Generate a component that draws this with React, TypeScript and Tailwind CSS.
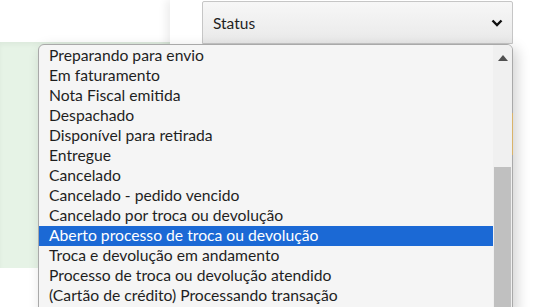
import React from 'react';

const options = [
  'Preparando para envio',
  'Em faturamento',
  'Nota Fiscal emitida',
  'Despachado',
  'Disponível para retirada',
  'Entregue',
  'Cancelado',
  'Cancelado - pedido vencido',
  'Cancelado por troca ou devolução',
  'Aberto processo de troca ou devolução',
  'Troca e devolução em andamento',
  'Processo de troca ou devolução atendido',
  '(Cartão de crédito) Processando transação',
];

const selected = 9;

export default function App() {
  return (
    <div
      className="relative w-[536px] h-[307px] overflow-hidden bg-white text-[#1f1f1f]"
      style={{ fontFamily: 'Lato, "Open Sans", sans-serif' }}
    >
      {/* Page behind the open select */}
      <div className="flex h-full">
        <div className="w-[170px] flex flex-col">
          <div className="h-[42px] bg-white" />
          <div className="h-[226px] bg-[#e6f3e6] shadow-[inset_0_3px_4px_rgba(0,0,0,0.04)]" />
          <div className="flex-1 bg-white" />
        </div>
        <div className="flex-1 bg-white shadow-[-4px_0_8px_rgba(0,0,0,0.07)] pl-[32px] pt-[1px] z-10">
          <div className="w-[311px] h-[43px] flex items-center justify-between pl-[10px] pr-[9px] border border-[#c6c6c6] rounded-t-[2px] bg-gradient-to-b from-[#f7f7f7] to-[#e9e9e9]">
            <span className="text-[15.5px] pt-[2px]">Status</span>
            <svg width="12" height="8" viewBox="0 0 12 8">
              <path d="M1.5 1.5 L6 6 L10.5 1.5" fill="none" stroke="#111" strokeWidth="2.4" />
            </svg>
          </div>
        </div>
      </div>

      {/* Open options list */}
      <div className="absolute left-[38px] top-[44px] w-[475px] h-[270px] z-20 bg-[#f5f5f5] border border-[#a9a9a9] rounded-t-[6px] shadow-[4px_4px_14px_rgba(0,0,0,0.18)] flex overflow-hidden">
        <ul className="flex-1 pt-[1px]">
          {options.map((o, i) => (
            <li
              key={o}
              className={
                'h-[20px] pl-[10px] text-[15.7px] leading-[19px] whitespace-nowrap ' +
                (i === selected ? 'bg-[#1b69d5] text-white' : '')
              }
            >
              {o}
            </li>
          ))}
        </ul>
        <div className="w-[19px] bg-[#f0f0f0] flex flex-col items-center">
          <svg className="mt-[10px]" width="10" height="6" viewBox="0 0 10 6">
            <path d="M0 6 L5 0 L10 6 Z" fill="#505050" />
          </svg>
          <div className="mt-[106px] w-[17px] flex-1 bg-[#c0c0c0]" />
        </div>
      </div>
      <div className="absolute left-[512px] top-[113px] w-[1px] h-[42px] bg-[#d9b36a] z-30" />
    </div>
  );
}
